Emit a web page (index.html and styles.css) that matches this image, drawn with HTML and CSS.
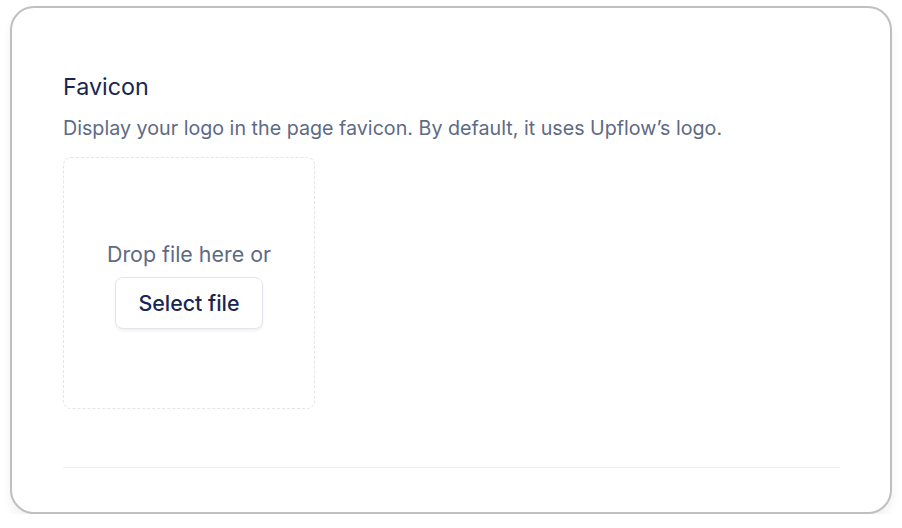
FILE: index.html
```html
<!DOCTYPE html>
<html>
<head>
<meta charset="utf-8">
<link rel="stylesheet" href="styles.css">
</head>
<body>
<div class="card">
  <h2 class="title">Favicon</h2>
  <p class="desc">Display your logo in the page favicon. By default, it uses Upflow’s logo.</p>
  <div class="dropzone">
    <span class="drop-text">Drop file here or</span>
    <button class="btn">Select file</button>
  </div>
  <hr class="divider">
</div>
</body>
</html>
```
FILE: styles.css
```css
html, body {
  margin: 0;
  padding: 0;
  background: #ffffff;
}
body {
  font-family: Inter, "Noto Sans", sans-serif;
  padding: 6px 10px 0 10px;
}
.card {
  box-sizing: border-box;
  width: 882px;
  height: 508px;
  border: 2px solid #bfbfbf;
  border-radius: 24px;
  background: #fff;
  box-shadow: 0 6px 10px rgba(0,0,0,0.06);
  padding: 64px 50px 0 51px;
}
.title {
  margin: 0;
  font-size: 23.3px;
  font-weight: 400;
  line-height: 30px;
  color: #1a2550;
}
.desc {
  margin: 13px 0 0 0;
  font-size: 19.7px;
  line-height: 26px;
  color: #5e6a85;
}
.dropzone {
  box-sizing: border-box;
  margin-top: 16px;
  width: 252px;
  height: 252px;
  border: 1px dashed #e3e5ea;
  border-radius: 8px;
  padding-top: 4px;
  display: flex;
  flex-direction: column;
  align-items: center;
  justify-content: center;
  gap: 10px;
}
.drop-text {
  font-size: 21.4px;
  line-height: 26px;
  color: #5e6a85;
}
.btn {
  box-sizing: border-box;
  width: 148px;
  height: 52px;
  border: 1px solid #e3e5ea;
  border-radius: 8px;
  background: #fff;
  box-shadow: 0 2px 3px rgba(16,24,40,0.06);
  font-family: Inter, "Noto Sans", sans-serif;
  font-size: 21.4px;
  font-weight: 500;
  color: #1a2550;
  cursor: pointer;
}
.divider {
  margin: 58px 0 0 0;
  border: 0;
  border-top: 1px solid #ececec;
  height: 0;
}
```
